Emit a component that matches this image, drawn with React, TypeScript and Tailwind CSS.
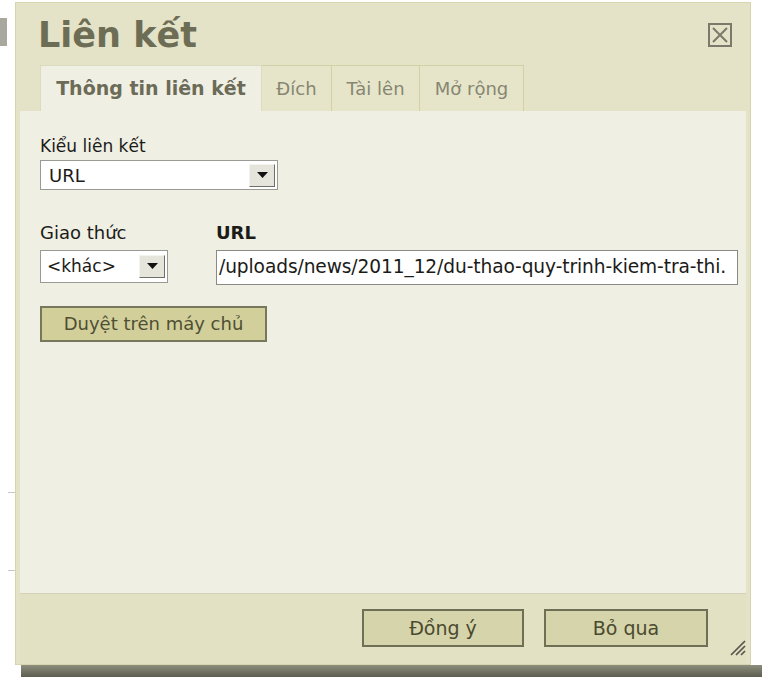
const tabs = [
  { label: "Đích", width: "w-[70px]" },
  { label: "Tài lên", width: "w-[88px]" },
  { label: "Mở rộng", width: "w-[104px]" },
];

function DropButton() {
  return (
    <div className="flex h-[23px] w-[26px] items-center justify-center border border-t-[#f4f4ee] border-l-[#f4f4ee] border-b-[#6f6f6a] border-r-[#6f6f6a] bg-[#e6e5dc]">
      <svg width="11" height="6" viewBox="0 0 11 6">
        <path d="M0 0h11L5.5 6z" fill="#111" />
      </svg>
    </div>
  );
}

function CloseIcon() {
  return (
    <div className="flex h-[24px] w-[24px] items-center justify-center border-2 border-[#7a7a6c]">
      <svg width="16" height="16" viewBox="0 0 16 16">
        <path d="M1 1l14 14M15 1L1 15" stroke="#7a7a6c" strokeWidth="2" />
      </svg>
    </div>
  );
}

function ResizeGrip() {
  return (
    <svg width="18" height="18" viewBox="0 0 18 18">
      <path d="M17 3L3 17M17 8L8 17M17 13L13 17" stroke="#55554a" strokeWidth="1.7" />
    </svg>
  );
}

export default function App() {
  return (
    <div className="flex h-[677px] w-[762px] overflow-hidden bg-white font-['DejaVu_Sans',sans-serif] text-[#1b1b18]">
      {/* page behind the dialog */}
      <div className="flex w-[15px] shrink-0 flex-col">
        <div className="mt-[18px] h-[28px] w-[7px] bg-[#a9a89f]" />
        <div className="ml-[8px] mt-[446px] h-px w-[7px] bg-[#c9c9c4]" />
        <div className="ml-[8px] mt-[77px] h-px w-[7px] bg-[#c9c9c4]" />
      </div>

      <div className="flex flex-1 flex-col">
        {/* dialog */}
        <div className="mt-[2px] flex h-[663px] w-[736px] flex-col border border-[#d6d5ad] bg-[#e4e3c8] px-[4px]">
          <div className="flex h-[62px] shrink-0 items-start justify-between pl-[18px] pr-[14px]">
            <div className="mt-[15px] text-[35px] font-bold leading-none text-[#6d6d56]">Liên kết</div>
            <div className="mt-[20px]">
              <CloseIcon />
            </div>
          </div>

          {/* tabs */}
          <div className="flex h-[46px] shrink-0 items-stretch pl-[20px]">
            <div className="flex w-[222px] items-center justify-center border border-b-0 border-[#dcdbbf] bg-[#f0efe4] text-[19px] font-bold text-[#6b6b57]">
              Thông tin liên kết
            </div>
            {tabs.map((t) => (
              <div
                key={t.label}
                className={`flex items-center justify-center border border-b-0 border-l-0 border-[#d2d1a6] bg-[#e6e5c9] text-[18px] text-[#868673] ${t.width}`}
              >
                {t.label}
              </div>
            ))}
          </div>

          {/* panel */}
          <div className="flex flex-1 flex-col bg-[#f0efe4] pl-[20px] pr-[8px] pt-[25px] text-[17px]">
            <div className="leading-tight">Kiểu liên kết</div>
            <div className="mt-[3px] flex h-[30px] w-[238px] items-center justify-between border border-[#9a9a94] bg-white pl-[8px] pr-[2px] text-[18px]">
              <span>URL</span>
              <DropButton />
            </div>

            <div className="mt-[32px] flex gap-[48px]">
              <div className="flex flex-col">
                <div className="text-[18px] leading-tight">Giao thức</div>
                <div className="mt-[5px] flex h-[33px] w-[128px] items-center justify-between border border-[#9a9a94] bg-white pl-[6px] pr-[2px]">
                  <span>&lt;khác&gt;</span>
                  <DropButton />
                </div>
              </div>
              <div className="flex flex-1 flex-col">
                <div className="text-[18px] font-bold leading-tight">URL</div>
                <div className="mt-[5px] flex h-[35px] w-[522px] items-center overflow-hidden whitespace-nowrap border border-[#8a8a84] bg-white pl-[2px] text-[18.6px] tracking-[-0.1px]">
                  /uploads/news/2011_12/du-thao-quy-trinh-kiem-tra-thi.
                </div>
              </div>
            </div>

            <button className="mt-[21px] flex h-[36px] w-[227px] items-center justify-center border-2 border-[#77775b] bg-[#d2cf9a] text-[18px] text-[#4f4f33]">
              Duyệt trên máy chủ
            </button>
          </div>

          {/* footer */}
          <div className="flex h-[71px] shrink-0 items-start border-t border-[#d3d2b4] bg-[#e2e1c3]">
            <div className="ml-auto mt-[15px] flex gap-[20px]">
              <button className="flex h-[38px] w-[162px] items-center justify-center border-2 border-[#6f6f56] bg-[#d6d4aa] text-[19px] text-[#4a4a30]">
                Đồng ý
              </button>
              <button className="flex h-[38px] w-[164px] items-center justify-center border-2 border-[#6f6f56] bg-[#d6d4aa] text-[19px] text-[#4a4a30]">
                Bỏ qua
              </button>
            </div>
            <div className="ml-[20px] mt-[44px]">
              <ResizeGrip />
            </div>
          </div>
        </div>
        {/* drop shadow under the dialog */}
        <div className="ml-[6px] h-[12px] bg-gradient-to-b from-[#8e8e7e] to-[#5d5d50]" />
      </div>
    </div>
  );
}
